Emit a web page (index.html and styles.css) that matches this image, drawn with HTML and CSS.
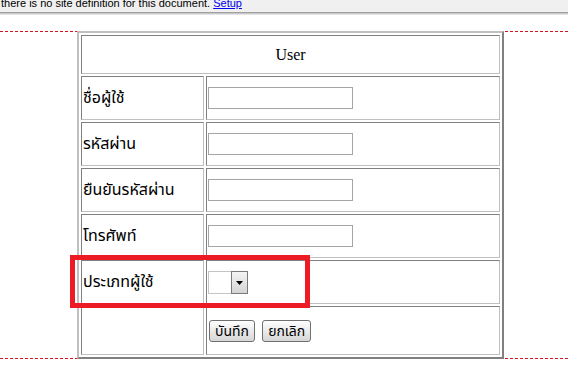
FILE: index.html
```html
<!DOCTYPE html>
<html lang="th">
<head>
    <meta charset="UTF-8">
    <title>User</title>
    <link rel="stylesheet" href="styles.css">
</head>
<body>
<div class="sitebar">
    <span class="sitebar-text">there is no site definition for this document. <a href="#">Setup</a></span>
</div>

<div class="design">
    <table class="usertable">
        <tr class="head">
            <td colspan="2" class="title">User</td>
        </tr>
        <tr>
            <td class="label">ชื่อผู้ใช้</td>
            <td><input type="text" class="field"></td>
        </tr>
        <tr>
            <td class="label">รหัสผ่าน</td>
            <td><input type="password" class="field"></td>
        </tr>
        <tr>
            <td class="label">ยืนยันรหัสผ่าน</td>
            <td><input type="password" class="field"></td>
        </tr>
        <tr>
            <td class="label">โทรศัพท์</td>
            <td><input type="text" class="field"></td>
        </tr>
        <tr>
            <td class="label">ประเภทผู้ใช้</td>
            <td>
                <span class="dropdown">
                    <span class="dropdown-value"></span>
                    <span class="dropdown-btn">
                        <svg width="7" height="4" viewBox="0 0 7 4"><path d="M0 0H7L3.5 4Z" fill="#000"/></svg>
                    </span>
                </span>
            </td>
        </tr>
        <tr class="actions">
            <td></td>
            <td>
                <button class="btn">บันทึก</button>
                <button class="btn">ยกเลิก</button>
            </td>
        </tr>
    </table>
    <div class="highlight"></div>
</div>
</body>
</html>
```

FILE: styles.css
```css
body {
    margin: 0;
    background-color: #fff;
    font-family: Tahoma, "Noto Sans Thai", "Noto Sans", sans-serif;
}
.sitebar {
    height: 12px;
    overflow: hidden;
    background-color: #f0f0f0;
    border-bottom: 1px solid #a0a0a0;
    box-shadow: 0 1px 0 #c8c8c8, 0 2px 0 #e4e4e4;
}
.sitebar-text {
    display: block;
    margin-top: -4px;
    padding-left: 1px;
    font-family: "Liberation Sans", Arial, sans-serif;
    font-size: 11px;
    line-height: 14px;
    color: #000;
}
.sitebar-text a {
    color: #0000ee;
}
.design {
    position: relative;
    margin-top: 18px;
    border-top: 1px dashed #d0161e;
    border-bottom: 1px dashed #d0161e;
}
.usertable {
    position: relative;
    width: 427px;
    margin: -1px 0 -1px 77px;
    background-color: #fff;
    border-collapse: separate;
    border-spacing: 2px;
    border: 2px solid;
    border-color: #c0c0c0 #808080 #808080 #c0c0c0;
}
.usertable td {
    padding: 1px;
    border: 1px solid;
    border-color: #808080 #c0c0c0 #c0c0c0 #808080;
    vertical-align: middle;
}
.usertable tr {
    height: 44px;
}
.usertable tr.head {
    height: 39px;
}
.usertable tr.actions {
    height: 49px;
}
.title {
    text-align: center;
    font-family: "Liberation Serif", "Times New Roman", serif;
    font-size: 16px;
}
.label {
    box-sizing: border-box;
    width: 123px;
    font-size: 16px;
}
.field {
    display: block;
    box-sizing: border-box;
    width: 145px;
    height: 22px;
    margin: 0;
    padding: 1px 2px;
    border: 1px solid #a5a5a5;
    font-size: 13px;
}
.dropdown {
    display: flex;
    width: 40px;
    height: 23px;
    margin-top: 1px;
}
.dropdown-value {
    flex: 1;
    border: 1px solid #c4c4c4;
    border-right: none;
    background-color: #fff;
}
.dropdown-btn {
    width: 15px;
    display: flex;
    align-items: center;
    justify-content: center;
    border: 1px solid #7a7a7a;
    background: linear-gradient(#f4f4f4, #d4d4d4);
}
.btn {
    height: 22px;
    margin: 0 2px 0 1px;
    padding: 0 5px;
    border: 1px solid #707070;
    border-radius: 3px;
    background: linear-gradient(#ffffff, #e6e6e6 60%, #d6d6d6);
    font-family: Tahoma, "Noto Sans Thai", sans-serif;
    font-size: 14px;
    color: #000;
}
.highlight {
    position: absolute;
    left: 70px;
    top: 223px;
    width: 230px;
    height: 43px;
    border: 5px solid #ed1c24;
}
```
